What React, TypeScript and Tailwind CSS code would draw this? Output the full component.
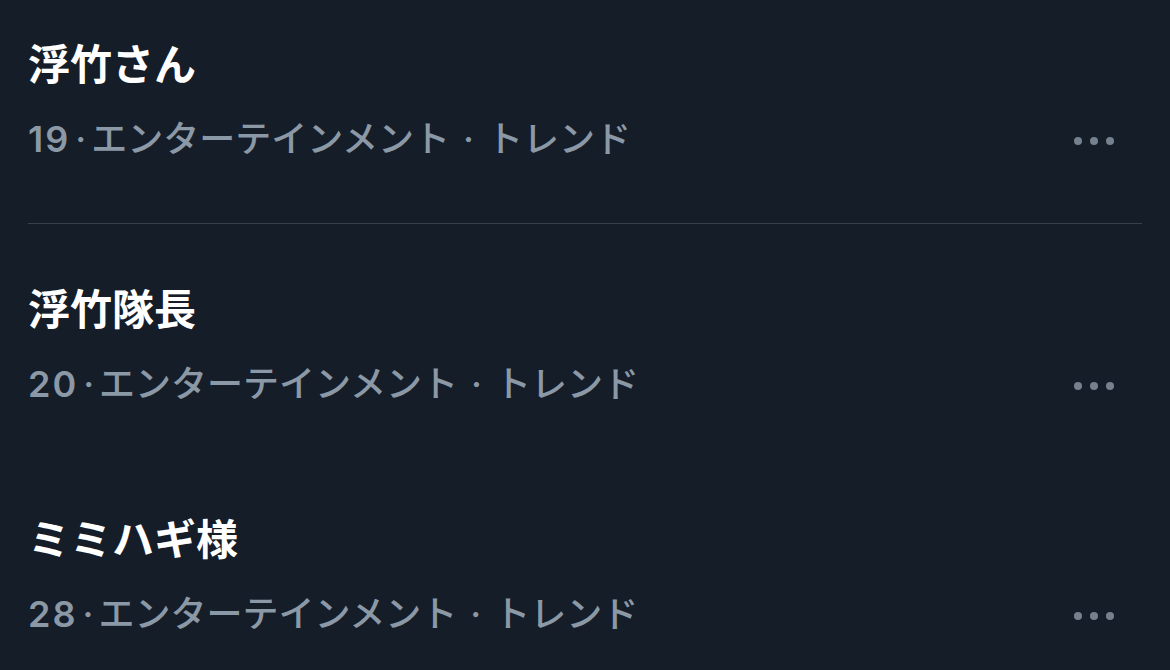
const trends = [
  { rank: 19, name: "浮竹さん", category: "エンターテインメント" },
  { rank: 20, name: "浮竹隊長", category: "エンターテインメント" },
  { rank: 28, name: "ミミハギ様", category: "エンターテインメント" },
];

function MoreDots() {
  return (
    <div className="mr-[28px] mt-[3px] flex items-center gap-[8px]">
      <span className="h-[8px] w-[8px] rounded-full bg-[#76818f]" />
      <span className="h-[8px] w-[8px] rounded-full bg-[#76818f]" />
      <span className="h-[8px] w-[8px] rounded-full bg-[#76818f]" />
    </div>
  );
}

function TrendRow({
  rank,
  name,
  category,
}: {
  rank: number;
  name: string;
  category: string;
}) {
  return (
    <div>
      <p className="text-[42px] font-bold leading-[48px] text-white">{name}</p>
      <div className="mt-[28px] flex h-[44px] items-center justify-between">
        <p className="text-[36px] font-medium leading-[44px] text-[#8b98a5]">
          <span className="font-semibold tracking-[2px]">{rank}</span>
          <span className="mx-[5px]">·</span>
          {category}
          <span className="mx-[13px]">·</span>
          トレンド
        </p>
        <MoreDots />
      </div>
    </div>
  );
}

export default function App() {
  return (
    <div
      className="h-[670px] w-[1170px] overflow-hidden bg-[#151d29] px-[28px] pt-[41px]"
      style={{ fontFamily: "Inter, 'Noto Sans CJK JP', sans-serif" }}
    >
      <div className="pb-[62px]">
        <TrendRow {...trends[0]} />
      </div>
      <div className="h-px bg-[#38404b]" />
      <div className="pb-[55px] pt-[62px]">
        <TrendRow {...trends[1]} />
      </div>
      <div className="pt-[55px]">
        <TrendRow {...trends[2]} />
      </div>
    </div>
  );
}
